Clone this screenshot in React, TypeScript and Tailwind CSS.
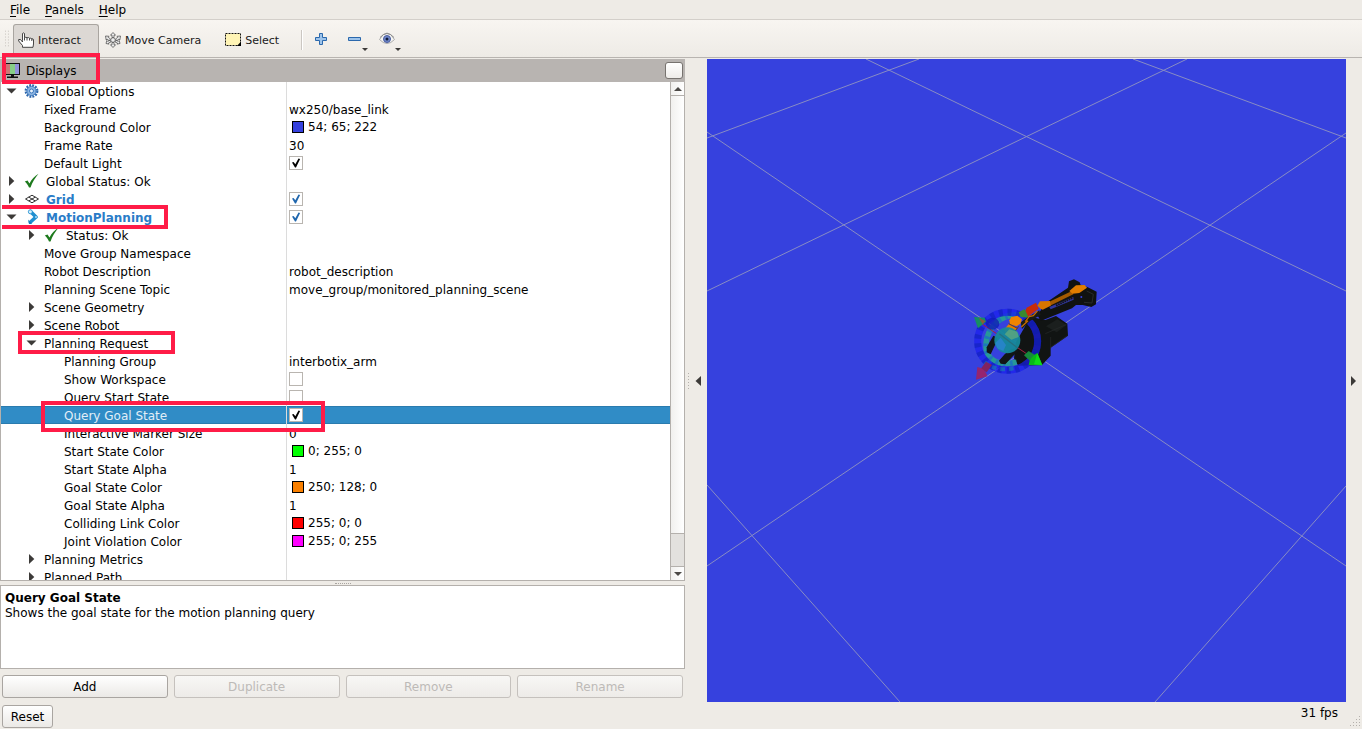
import React, { useState } from 'react';

interface Property {
  id: string;
  name: string;
  depth: number;
  state?: 'open' | 'closed';
  icon?: React.ReactNode;
  bold?: boolean;
  text?: string;
  color?: string;
  check?: 'black' | 'blue';
  mark?: string;
}

const ArrowDown = () => (
  <svg className="w-3 h-3" viewBox="0 0 12 12" fill="#3c3a38">
    <path d="M1.500 3.500h10l-5 5z" />
  </svg>
);

const ArrowRight = () => (
  <svg className="w-3 h-3" viewBox="0 0 12 12" fill="#3c3a38">
    <path d="M4 1v10l5.300-5z" />
  </svg>
);

const GearIcon = () => (
  <svg className="w-4 h-4" viewBox="0 0 16 16" fill="none">
    <circle cx="7.500" cy="8" r="5.800" stroke="#2f68ad" strokeWidth="2.200" strokeDasharray="1.900 1.137" />
    <circle cx="7.500" cy="8" r="4.600" fill="#8db5e2" stroke="#3c78bd" />
    <circle cx="7.500" cy="8" r="2" fill="#e8f1fb" stroke="#3c78bd" />
  </svg>
);

const OkIcon = () => (
  <svg className="w-4 h-4" viewBox="0 0 16 16" fill="#1d7a1d">
    <path d="M.8 8.500l2.700-1 2 3C7.500 6.500 10.500 3 14.500.8 11 5 8.300 9.500 6.500 14.500H5C4 12 2.600 10 .8 8.500z" />
  </svg>
);

const GridIcon = () => (
  <svg className="w-4 h-4" viewBox="0 0 16 16" fill="none" stroke="#333" strokeWidth="1">
    <path d="M1.500 8L8 4.200 14.500 8 8 11.800zM4.700 6.100l6.500 3.800M11.300 6.100L4.800 9.900" />
  </svg>
);

const MotionIcon = () => (
  <svg className="w-4 h-4" viewBox="0 0 16 16" fill="none">
    <path d="M6.500 2.500L12 8l-5.500 5" stroke="#1f8fd0" strokeWidth="3.600" strokeLinejoin="round" strokeLinecap="round" />
    <circle cx="6.300" cy="2.800" r="2" fill="#d5edfa" stroke="#1f8fd0" strokeWidth=".8" />
    <circle cx="12" cy="8" r="1" fill="#a8d8f5" />
    <path d="M4 10.500l4 4.500H5z" fill="#1679b8" />
  </svg>
);

const properties: Property[] = [
  { id: 'global', name: 'Global Options', depth: 0, state: 'open', icon: <GearIcon /> },
  { id: 'frame', name: 'Fixed Frame', depth: 1, text: 'wx250/base_link' },
  { id: 'background', name: 'Background Color', depth: 1, color: '#3641de', text: '54; 65; 222' },
  { id: 'rate', name: 'Frame Rate', depth: 1, text: '30' },
  { id: 'light', name: 'Default Light', depth: 1, check: 'black' },
  { id: 'status', name: 'Global Status: Ok', depth: 0, state: 'closed', icon: <OkIcon /> },
  { id: 'grid', name: 'Grid', depth: 0, state: 'closed', icon: <GridIcon />, bold: true, check: 'blue' },
  {
    id: 'motion', name: 'MotionPlanning', depth: 0, state: 'open', icon: <MotionIcon />, bold: true, check: 'blue',
    mark: '-top-[3px] left-px w-[166px] h-6 border-l-0'
  },
  { id: 'motionStatus', name: 'Status: Ok', depth: 1, state: 'closed', icon: <OkIcon /> },
  { id: 'namespace', name: 'Move Group Namespace', depth: 1 },
  { id: 'description', name: 'Robot Description', depth: 1, text: 'robot_description' },
  { id: 'topic', name: 'Planning Scene Topic', depth: 1, text: 'move_group/monitored_planning_scene' },
  { id: 'geometry', name: 'Scene Geometry', depth: 1, state: 'closed' },
  { id: 'robot', name: 'Scene Robot', depth: 1, state: 'closed' },
  {
    id: 'request', name: 'Planning Request', depth: 1, state: 'open',
    mark: '-top-[3px] left-[17px] w-[157px] h-[23px]'
  },
  { id: 'group', name: 'Planning Group', depth: 2, text: 'interbotix_arm' },
  { id: 'workspace', name: 'Show Workspace', depth: 2, check: 'black' },
  { id: 'start', name: 'Query Start State', depth: 2, check: 'black' },
  {
    id: 'goal', name: 'Query Goal State', depth: 2, check: 'black',
    mark: '-top-[5px] left-10 w-[284px] h-[31px]'
  },
  { id: 'marker', name: 'Interactive Marker Size', depth: 2, text: '0' },
  { id: 'startColor', name: 'Start State Color', depth: 2, color: '#00ff00', text: '0; 255; 0' },
  { id: 'startAlpha', name: 'Start State Alpha', depth: 2, text: '1' },
  { id: 'goalColor', name: 'Goal State Color', depth: 2, color: '#fa8000', text: '250; 128; 0' },
  { id: 'goalAlpha', name: 'Goal State Alpha', depth: 2, text: '1' },
  { id: 'colliding', name: 'Colliding Link Color', depth: 2, color: '#ff0000', text: '255; 0; 0' },
  { id: 'violation', name: 'Joint Violation Color', depth: 2, color: '#ff00ff', text: '255; 0; 255' },
  { id: 'metrics', name: 'Planning Metrics', depth: 1, state: 'closed' },
  { id: 'path', name: 'Planned Path', depth: 1, state: 'closed' }
];

const indents = ['pl-0', 'pl-5', 'pl-10'];

const Mark = ({ className }: { className: string }) => (
  <span className={`absolute border-4 border-[#ff1c47] pointer-events-none ${className}`} />
);

const PropertyTree = () => {
  const [checked, setChecked] = useState<Record<string, boolean>>({
    light: true,
    grid: true,
    motion: true,
    goal: true
  });
  const [selected, setSelected] = useState('goal');

  const getRowColor = (id: string) =>
    id === selected
      ? 'bg-[#308cc6] text-[#e2eef7] shadow-[inset_0_1px_0_#2a7bae,inset_0_-1px_0_#2a7bae]'
      : '';

  return (
    <table className="w-full table-fixed border-separate border-spacing-0">
      <tbody>
        {properties.map((item) => (
          <tr key={item.id} className={`h-[18px] ${getRowColor(item.id)}`} onClick={() => setSelected(item.id)}>
            <td className={`w-[285px] p-0 ${item.mark ? 'relative' : ''}`}>
              <div className={`flex items-center h-[18px] ${indents[item.depth]}`}>
                <span className="w-5 pl-1 mr-[3px] shrink-0">
                  {item.state === 'open' && <ArrowDown />}
                  {item.state === 'closed' && <ArrowRight />}
                </span>
                {item.icon && <span className="mr-[6px]">{item.icon}</span>}
                <span id={item.id} className={`mt-[2px] ${item.bold ? 'font-bold text-[#2a7cc8]' : ''}`}>
                  {item.name}
                </span>
              </div>
              {item.mark && <Mark className={item.mark} />}
            </td>
            <td className="p-0 border-l border-[#dcdcdc]">
              <div className="flex items-center h-[18px] pl-[2px]">
                {item.color && (
                  <span
                    className="w-3 h-3 ml-[3px] mr-1 border border-black"
                    style={{ backgroundColor: item.color }}
                  />
                )}
                {item.text && <span className={item.color ? '' : 'mt-[2px]'}>{item.text}</span>}
                {item.check && (
                  <span className="grid w-[14px] h-[14px]">
                    <input
                      type="checkbox"
                      aria-labelledby={item.id}
                      checked={!!checked[item.id]}
                      onChange={(e) => setChecked({ ...checked, [item.id]: e.target.checked })}
                      className="appearance-none col-start-1 row-start-1 w-[14px] h-[14px] bg-white border border-[#b9b5b0]"
                    />
                    {checked[item.id] && (
                      <svg
                        className={`col-start-1 row-start-1 w-[14px] h-[14px] pointer-events-none ${item.check === 'blue' ? 'text-[#1f66ad]' : 'text-black'}`}
                        viewBox="0 0 14 14"
                        fill="currentColor"
                      >
                        <path d="M3 6.500l1.600-.6 1.700 2.400L9.500 2.600l1.600.3L7 11.500H6z" />
                      </svg>
                    )}
                  </span>
                )}
              </div>
            </td>
          </tr>
        ))}
      </tbody>
    </table>
  );
};

const MenuBar = () => (
  <nav className="flex items-center h-5 pl-[10px] gap-[15px] border-b border-[#d3cfca]">
    {['File', 'Panels', 'Help'].map((menu) => (
      <button key={menu}>
        <span className="underline underline-offset-2">{menu[0]}</span>
        {menu.slice(1)}
      </button>
    ))}
  </nav>
);

const ToolBar = () => (
  <div className="flex h-[38px] border-b border-[#b8b4b0] bg-gradient-to-b from-[#f8f5f1] to-[#eeebe6] text-[11px] text-[#1a1a1a]">
    <svg className="w-[13px] h-full" viewBox="0 0 13 38">
      <path d="M5.500 11v17M8.500 11v17" stroke="#c4c0bb" strokeDasharray="1 2" />
    </svg>
    <button className="flex items-center w-[86px] mt-1 pl-1 pb-[2px] gap-1 border border-b-0 border-[#a9a5a0] rounded-t-[3px] bg-[#dcd8d4]">
      <svg className="w-4 h-4" viewBox="0 0 16 16" fill="#fff" stroke="#333" strokeWidth=".9">
        <path d="M4.500 8.500V1.500Q5.500.3 6.500 1.500V5.500Q8 4.800 9 5.800 10.500 5 11.500 6.300 13 5.800 13.800 6.800 15.500 6.500 15.500 8V12L15 15.300H4.500V13.500L.7 9V7.500H2.500L4.500 10z" />
        <path d="M6.500 5.500V8.500M9 5.800V8.500M11.500 6.300V8.500M13.800 6.800V9" fill="none" />
      </svg>
      <span className="pt-[2px]">Interact</span>
    </button>
    <button className="flex items-center ml-[6px] mt-1 pb-[2px] gap-1">
      <svg className="w-4 h-4" viewBox="0 0 16 16" fill="#eee" stroke="#555" strokeWidth=".8">
        <path d="M8 .5l2.500 2.700H9V5.500h-2V3.200H5.500zM8 15.500l2.500-2.700H9v-2.300H7v2.300H5.500zM.5 4l3.500.3-.8 1L5.500 7 4.200 8.700 2 7 1.200 8zM15.500 4l-3.500.3.8 1L10.500 7l1.300 1.700L14 7l.8 1zM1 11.500l.8-3 .8.9 2.600-1.200.8 1.700-2.600 1.200.6 1zM15 11.500l-.8-3-.8.9-2.600-1.200-.8 1.700 2.600 1.200-.6 1z" />
        <circle cx="8" cy="8" r="2.300" />
      </svg>
      <span className="pt-[2px]">Move Camera</span>
    </button>
    <button className="flex items-center ml-6 mt-1 pb-[2px] gap-1">
      <svg className="w-4 h-4" viewBox="0 0 16 16">
        <path d="M.5 1.500h15v12H.5z" fill="#fff4b5" stroke="#111" strokeDasharray="2 1" />
        <path d="M16 9.500V14h-4z" fill="#000" />
      </svg>
      <span className="pt-[2px]">Select</span>
    </button>
    <span className="w-[2px] h-5 ml-[22px] mt-[10px] border-l border-[#cbc7c2] bg-white" />
    <button aria-label="Add tool" className="ml-3">
      <svg className="w-3 h-3" viewBox="0 0 12 12" fill="#9dc3ea" stroke="#2b68ac">
        <path d="M4.500.5h3v4h4v3h-4v4h-3v-4h-4v-3h4z" />
      </svg>
    </button>
    <button aria-label="Remove tool" className="ml-[21px]">
      <svg className="w-[21px] h-6" viewBox="0 0 21 24">
        <path d="M.5 10.500h12v3H.5z" fill="#9dc3ea" stroke="#2b68ac" />
        <path d="M14 21h6l-3 3z" fill="#3c3a38" />
      </svg>
    </button>
    <button aria-label="View" className="ml-[10px]">
      <svg className="w-[23px] h-6" viewBox="0 0 23 24">
        <path d="M.5 12.500Q8-.5 15.500 12.500 8 20.500.5 12.500z" fill="#f5f5f3" stroke="#aaa" />
        <path d="M1 10.500Q8 2.500 15 10.500" fill="none" stroke="#888" />
        <circle cx="8" cy="12" r="3.500" fill="#6f87c8" stroke="#485b9f" />
        <circle cx="8" cy="12" r="1.500" fill="#101a38" />
        <path d="M16 21h6l-3 3z" fill="#3c3a38" />
      </svg>
    </button>
  </div>
);

const ScrollBar = () => (
  <div className="flex flex-col w-[14px] border-l border-[#b4b0ac] bg-gradient-to-r from-[#f1f0ee] to-white">
    <button aria-label="Scroll up" className="grid place-items-center h-[14px] border-b border-[#b4b0ac]">
      <svg className="w-2 h-1" viewBox="0 0 8 4" fill="#4b4845"><path d="M0 4h8L4 0z" /></svg>
    </button>
    <span className="flex-1" />
    <span className="h-[34px] border-y border-[#b4b0ac] bg-[#e3e1de]" />
    <button aria-label="Scroll down" className="grid place-items-center h-[13px]">
      <svg className="w-2 h-1" viewBox="0 0 8 4" fill="#4b4845"><path d="M0 0h8L4 4z" /></svg>
    </button>
  </div>
);

const DisplaysPanel = () => {
  const actions = [
    { label: 'Add', enabled: true },
    { label: 'Duplicate', enabled: false },
    { label: 'Remove', enabled: false },
    { label: 'Rename', enabled: false }
  ];

  return (
    <section className="flex flex-col w-[685px] min-h-0 pb-1">
      <header className="relative flex items-center h-[23px] shrink-0 pl-[5px] pr-[2px] bg-[#b8b4b1]">
        <svg className="w-4 h-4" viewBox="0 0 16 16">
          <path d="M0 0h15v12H0z" fill="#111" />
          <path d="M1 1h4v10H1z" fill="#cc7777" />
          <path d="M5 1h5v10H5z" fill="#87cf87" />
          <path d="M10 1h4v10h-4z" fill="#9292dc" />
          <path d="M6 12h3v1.500h4V15H2v-1.500h4z" fill="#111" />
        </svg>
        <h2 className="flex-1 ml-[5px]">Displays</h2>
        <button
          aria-label="Float panel"
          className="w-[18px] h-[17px] rounded-[3px] border border-[#77736f] bg-gradient-to-b from-white to-[#eeece9]"
        />
        <Mark className="-top-[6px] left-[2px] w-[98px] h-[31px]" />
      </header>

      <div className="flex flex-1 min-h-0 border border-t-0 border-[#b4b0ac] bg-white">
        <div className="flex-1 overflow-hidden">
          <PropertyTree />
        </div>
        <ScrollBar />
      </div>

      <div className="flex items-center justify-center h-1 shrink-0">
        <span className="w-4 border-t border-dotted border-[#a8a4a0]" />
      </div>

      <div className="h-[84px] shrink-0 pt-[5px] px-1 border border-[#b4b0ac] bg-white leading-[15px]">
        <h3 className="font-bold">Query Goal State</h3>
        <p>Shows the goal state for the motion planning query</p>
      </div>

      <div className="grid grid-cols-4 gap-[6px] px-[2px] mt-[6px] shrink-0">
        {actions.map((action) => (
          <button
            key={action.label}
            disabled={!action.enabled}
            className="h-[23px] rounded-[3px] border border-[#a9a5a1] bg-gradient-to-b from-white to-[#ebe9e6] disabled:border-[#c5c1bd] disabled:from-[#f8f7f5] disabled:to-[#edebe8] disabled:text-[#bdbab7]"
          >
            {action.label}
          </button>
        ))}
      </div>
    </section>
  );
};

const Robot = () => (
  <g transform="translate(243 206) scale(.33333)">
    {/* base and arm body */}
    <path d="M286 165L318 153L352 176L354 212L302 248V272L276 300L205 302L192 280L198 232L222 190L240 155z" fill="#111413" />
    <path d="M354 68L357 49L372 43L389 52L392 60L412 66L440 80L438 118L424 126L398 120L378 120L366 130L272 168L262 150L290 112z" fill="#101211" />
    <path d="M288 184L322 163L350 180L320 202z" fill="#1b1f1e" />
    <path d="M286 206L350 178M302 247L352 212M302 250V216" fill="none" stroke="#272a2a" strokeWidth="2" />
    <path d="M298 126L370 96L371 104L302 133z" fill="#3037a0" />
    <path d="M318 122L368 98" stroke="#161616" strokeWidth="6" strokeDasharray="5 2" />
    <circle cx="394" cy="96" r="3" fill="#3641de" />
    <path d="M410 78L430 88L426 114L402 112" fill="none" stroke="#292b2b" strokeWidth="3" />

    {/* rotation rings */}
    <path d="M216 152C156 138 110 190 108 238C106 284 142 304 200 292" fill="none" stroke="#25a88c" strokeWidth="17" opacity=".85" />
    <path d="M216 152C156 138 110 190 108 238C106 284 142 304 200 292" fill="none" stroke="#1c6fc4" strokeWidth="17" strokeDasharray="8 14" opacity=".8" />
    <ellipse cx="173" cy="229" rx="90" ry="87" fill="none" stroke="#1a1fee" strokeWidth="21" opacity=".72" />
    <ellipse cx="173" cy="229" rx="90" ry="87" fill="none" stroke="#0c20a8" strokeWidth="21" strokeDasharray="12 14" opacity=".45" />
    <path d="M104 292Q140 322 200 308" fill="none" stroke="#158ea8" strokeWidth="12" strokeDasharray="14 12" opacity=".55" />

    {/* goal state links */}
    <path d="M298 110L366 78L370 88L300 122z" fill="#a35a00" />
    <path d="M358 78L378 61L404 60L411 68L388 84L368 86z" fill="#e07d00" />
    <path d="M262 122L270 109L300 108L302 122L278 134L270 130z" fill="#d87500" />
    <path d="M230 128L258 113L266 131L232 156L222 146z" fill="#c72c09" />
    <path d="M206 142L224 132L236 158L212 156z" fill="#3a8a30" />
    <path d="M212 172L234 156L268 136L272 150L240 168L216 192z" fill="#191b15" />
    <path d="M226 170L237 155L250 152L262 138M214 186L234 167" stroke="#c46b00" strokeWidth="4" fill="none" />
    <path d="M178 166L184 156L202 152L216 163L211 176L200 184L180 178z" fill="#f08400" />
    <path d="M162 194L176 178L200 190L190 208L172 212z" fill="#e67c00" />
    <path d="M176 176L202 190M190 206L206 184" stroke="#754100" strokeWidth="3" />

    {/* gripper */}
    <path d="M110 247L130 212L142 218L138 234L122 268L110 262z" fill="#121616" />
    <path d="M147 287L164 268L180 254L200 248L206 258L190 272L166 298L152 296z" fill="#121616" />
    <path d="M92 174L237 271" stroke="#a32340" strokeWidth="3" />
    <circle cx="172" cy="226" r="39" fill="#16899a" opacity=".95" />
    <path d="M164 208L178 193L202 200L206 216L184 224z" fill="#63a97c" opacity=".75" />
    <path d="M136 234L152 218L168 240L160 258L142 250z" fill="#2d83d8" opacity=".7" />
    <path d="M148 206L204 250" stroke="#247080" strokeWidth="4" />

    {/* axis arrows */}
    <ellipse cx="128" cy="176" rx="20" ry="18" fill="#101bb8" opacity=".8" />
    <path d="M72 156L104 158L108 170L84 190z" fill="#168e63" />
    <path d="M86 158L106 168L98 178z" fill="#8a5a38" />
    <path d="M222 271L236 258L258 272L244 292z" fill="#17893c" />
    <path d="M262 264L277 301L236 300Q238 276 262 264z" fill="#08b818" />
    <path d="M262 264L277 301L252 298z" fill="#10dc18" />
    <path d="M108 290L126 300L110 322L92 312z" fill="#802360" />
    <path d="M78 344L82 306Q106 310 112 334z" fill="#95256f" />
  </g>
);

const Viewport = () => (
  <svg
    role="img"
    aria-label="3D view"
    className="flex-1 min-w-0 h-full bg-[#3641de]"
    viewBox="0 0 639 643"
    preserveAspectRatio="xMidYMid slice"
  >
    <path
      d="M0 73L639 507M639 74L0 507M0 79L212 0M159 0L639 232M480 0L0 232M426 0L639 79M0 426L193 643M639 427L448 643"
      fill="none"
      stroke="#888cc4"
      strokeWidth="1"
    />
    <Robot />
  </svg>
);

const App: React.FC = () => (
  <div className="flex flex-col h-screen overflow-hidden bg-[#eeebe6] text-black text-[12px] leading-[18px] font-['DejaVu_Sans',sans-serif]">
    <MenuBar />
    <ToolBar />

    <main className="flex flex-1 min-h-0 pt-px">
      <DisplaysPanel />
      <div className="flex items-center w-[22px] pl-[3px]">
        <svg className="w-[14px] h-4" viewBox="0 0 14 16">
          <path d="M.5 0v16" stroke="#b4b0ac" strokeDasharray="1 2" />
          <path d="M13 3v10L7.500 8z" fill="#3c3a38" />
        </svg>
      </div>
      <Viewport />
      <button aria-label="Show right panel" className="flex items-center w-4 pl-1">
        <svg className="w-[7px] h-[10px]" viewBox="0 0 7 10" fill="#3c3a38"><path d="M1 0v10l5-5z" /></svg>
      </button>
    </main>

    <footer className="flex justify-between h-[27px] pt-[3px] pl-[2px]">
      <button className="w-[51px] h-[23px] rounded-[3px] border border-[#a9a5a1] bg-gradient-to-b from-white to-[#ebe9e6]">
        Reset
      </button>
      <div className="flex gap-[11px]">
        <span className="-mt-px">31 fps</span>
        <svg className="w-[13px] h-6" viewBox="0 0 13 24" fill="#b4b0ac">
          <path d="M10 11h1v1h-1zM7 14h1v1H7zM10 14h1v1h-1zM4 17h1v1H4zM7 17h1v1H7zM10 17h1v1h-1zM1 20h1v1H1zM4 20h1v1H4zM7 20h1v1H7zM10 20h1v1h-1z" />
        </svg>
      </div>
    </footer>
  </div>
);

export default App;
